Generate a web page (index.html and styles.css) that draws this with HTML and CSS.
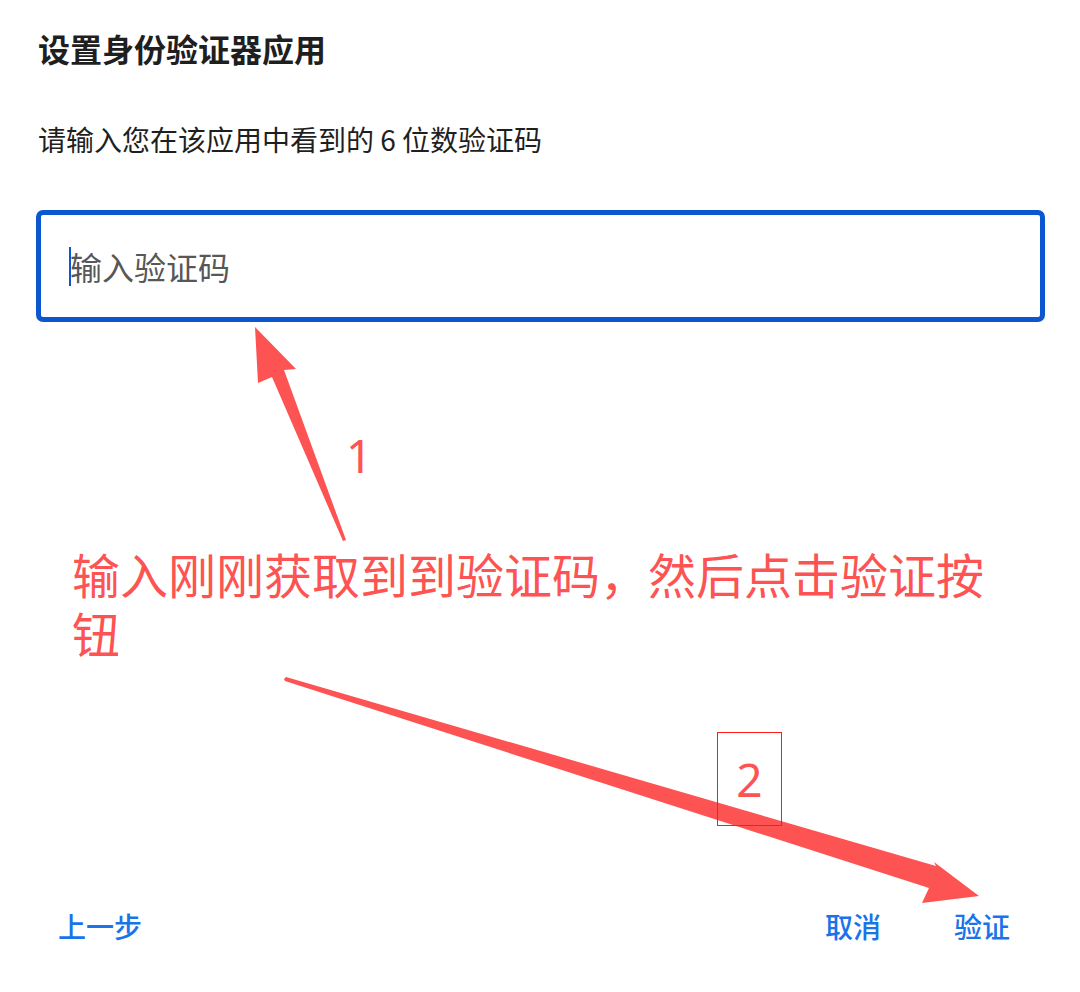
FILE: index.html
```html
<!DOCTYPE html>
<html lang="zh-CN">
<head>
<meta charset="utf-8">
<title>设置身份验证器应用</title>
<link rel="stylesheet" href="styles.css">
</head>
<body>
<div class="page">
  <h1 class="title">设置身份验证器应用</h1>
  <p class="subtitle">请输入您在该应用中看到的 6 位数验证码</p>
  <div class="field">
    <span class="caret"></span><span class="placeholder">输入验证码</span>
  </div>
  <div class="spacer"></div>
  <div class="footer">
    <button class="btn">上一步</button>
    <div class="actions">
      <button class="btn">取消</button>
      <button class="btn">验证</button>
    </div>
  </div>
</div>

<div class="annotations">
  <svg class="arrows" width="1080" height="992" viewBox="0 0 1080 992" xmlns="http://www.w3.org/2000/svg">
    <polygon fill="#fd5353" points="255,327 296,369 284,370 346,540 343,541 272,377 258,383"/>
    <polygon fill="#fd5353" points="284,679 286,677 936,866 934,862 979,896 922,903 929,888 285,681"/>
  </svg>
  <div class="note-text">输入刚刚获取到到验证码，然后点击验证按钮</div>
  <div class="num num-1">1</div>
  <div class="num num-2">2</div>
</div>
</body>
</html>
```

FILE: styles.css
```css
html, body {
  margin: 0;
  padding: 0;
  background: #ffffff;
}

body {
  font-family: "Noto Sans CJK SC", "Noto Sans", sans-serif;
  color: #1f1f1f;
}

.page {
  position: relative;
  height: 992px;
  box-sizing: border-box;
  display: flex;
  flex-direction: column;
  padding: 28px 35px 0 36px;
}

.title {
  margin: 0 0 0 2px;
  font-size: 32px;
  line-height: 40px;
  font-weight: 700;
  color: #1f1f1f;
}

.subtitle {
  margin: 51px 0 0 2px;
  font-size: 28px;
  line-height: 40px;
  font-weight: 400;
  color: #1f1f1f;
}

.field {
  margin-top: 51px;
  height: 112px;
  box-sizing: border-box;
  border: 5px solid #0b57d0;
  border-radius: 7px;
  display: flex;
  align-items: center;
  padding-left: 28px;
}

.caret {
  display: inline-block;
  width: 2px;
  height: 39px;
  background: #0b57d0;
  margin-right: -1px;
}

.placeholder {
  font-size: 32px;
  line-height: 40px;
  color: #575757;
}

.spacer {
  flex: 1;
}

.footer {
  display: flex;
  justify-content: space-between;
  align-items: center;
  height: 80px;
  margin: 0 11px 26px -2px;
}

.actions {
  display: flex;
  gap: 25px;
}

.btn {
  background: none;
  border: none;
  font-family: "Noto Sans CJK SC", "Noto Sans", sans-serif;
  font-size: 28px;
  line-height: 40px;
  font-weight: 500;
  color: #1a73e8;
  padding: 0 24px;
  cursor: pointer;
}

.annotations {
  position: absolute;
  left: 0;
  top: 0;
  width: 1080px;
  height: 992px;
  pointer-events: none;
}

.arrows {
  position: absolute;
  left: 0;
  top: 0;
}

.note-text {
  position: absolute;
  left: 72px;
  top: 544px;
  width: 940px;
  font-size: 48px;
  line-height: 59px;
  color: #fd5353;
}

.num {
  position: absolute;
  color: #fd5353;
  font-family: "Noto Sans", "Liberation Sans", sans-serif;
  line-height: 1;
}

.num-1 {
  left: 346px;
  top: 432px;
  font-size: 46px;
}

.num-2 {
  left: 717px;
  top: 732px;
  width: 65px;
  height: 94px;
  box-sizing: border-box;
  border: 1.5px solid #ff1a1a;
  display: flex;
  align-items: center;
  justify-content: center;
  font-size: 46px;
}
```
